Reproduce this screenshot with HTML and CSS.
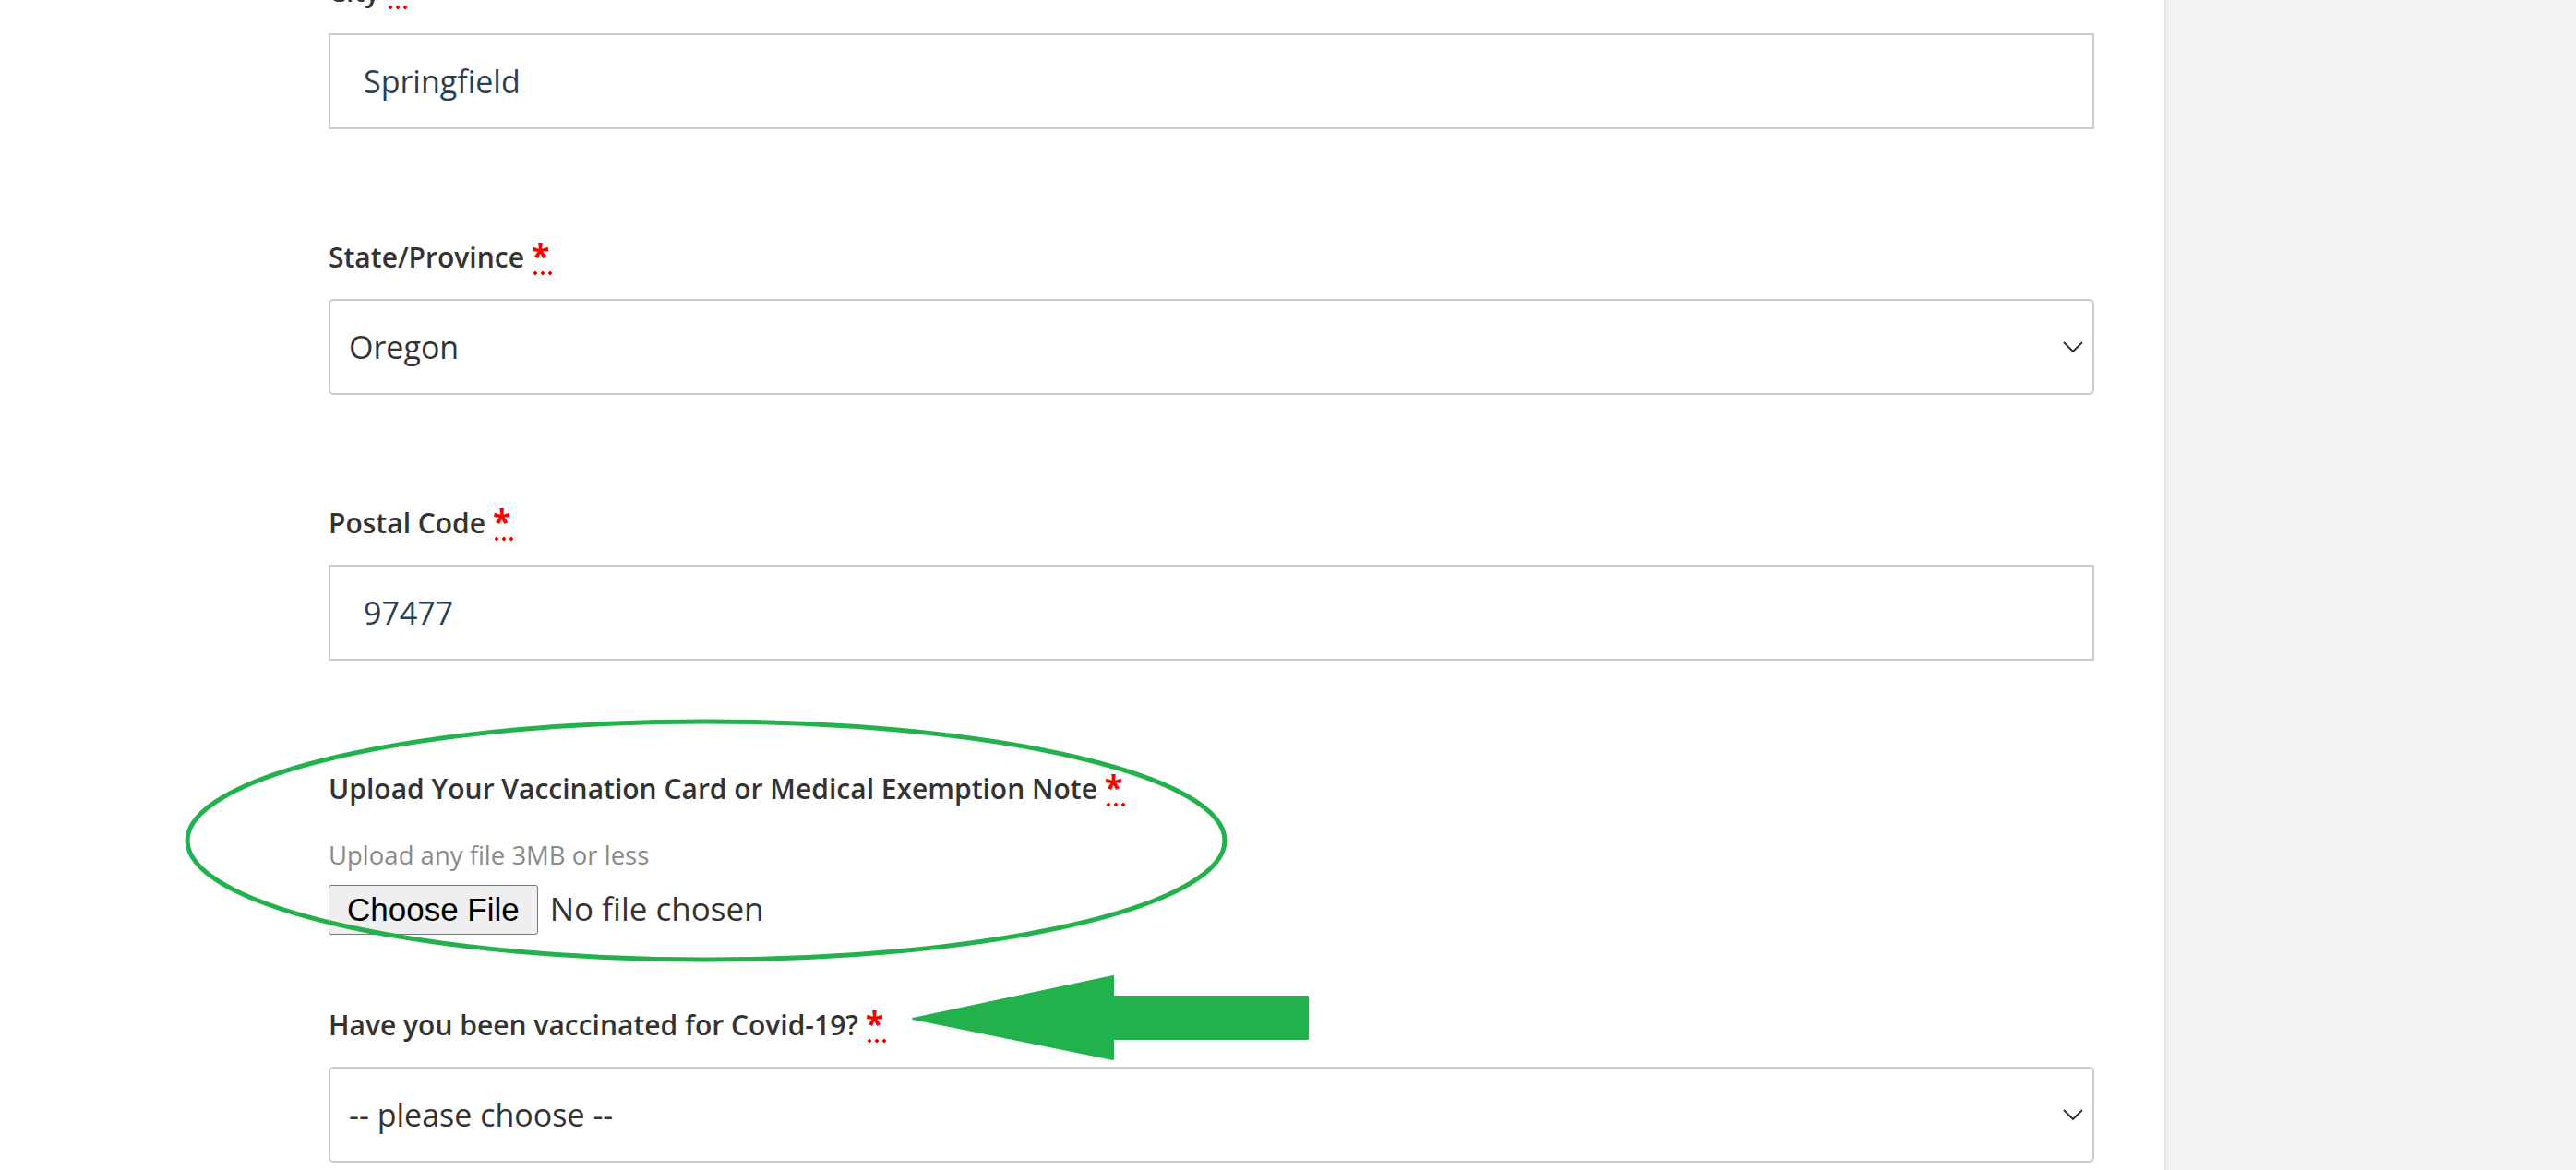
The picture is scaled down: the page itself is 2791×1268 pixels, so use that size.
FILE: index.html
```html
<!DOCTYPE html>
<html lang="en">
<head>
    <meta charset="UTF-8">
    <meta name="viewport" content="width=device-width, initial-scale=1.0">
    <title>Registration</title>
    <link rel="stylesheet" href="styles.css">
</head>
<body>
    <div class="page">
        <div class="main">
            <form class="reg-form">
                <div class="field">
                    <label for="city">City <abbr class="req" title="required">*</abbr></label>
                    <input type="text" id="city" class="text-input" value="Springfield">
                </div>

                <div class="field">
                    <label for="state">State/Province <abbr class="req" title="required">*</abbr></label>
                    <div class="select-wrap">
                        <select id="state">
                            <option>Oregon</option>
                            <option>Washington</option>
                            <option>California</option>
                        </select>
                        <svg class="chevron" width="22" height="12" viewBox="0 0 22 12"><polyline points="1,1 11,11 21,1" fill="none" stroke="#333" stroke-width="2"/></svg>
                    </div>
                </div>

                <div class="field">
                    <label for="postal">Postal Code <abbr class="req" title="required">*</abbr></label>
                    <input type="text" id="postal" class="text-input" value="97477">
                </div>

                <!-- upload -->
                <div class="field field-upload">
                    <label for="card">Upload Your Vaccination Card or Medical Exemption Note <abbr class="req" title="required">*</abbr></label>
                    <div class="hint">Upload any file 3MB or less</div>
                    <input type="file" id="card" class="file-input">
                </div>

                <div class="field">
                    <label for="vaccinated">Have you been vaccinated for Covid-19? <abbr class="req" title="required">*</abbr></label>
                    <div class="select-wrap">
                        <select id="vaccinated">
                            <option>-- please choose --</option>
                            <option>Yes</option>
                            <option>No</option>
                        </select>
                        <svg class="chevron" width="22" height="12" viewBox="0 0 22 12"><polyline points="1,1 11,11 21,1" fill="none" stroke="#333" stroke-width="2"/></svg>
                    </div>
                </div>
            </form>
        </div>
        <div class="sidebar"></div>
    </div>

    <!-- annotations drawn over the form -->
    <svg class="markup" width="2791" height="1268" viewBox="0 0 2791 1268">
        <ellipse cx="765" cy="911" rx="562" ry="129" fill="none" stroke="#22b14c" stroke-width="5"/>
        <polygon points="989,1104 1206,1058 1206,1080 1417,1080 1417,1126 1206,1126 1206,1148" fill="#22b14c" stroke="#22b14c" stroke-width="2" stroke-linejoin="round"/>
    </svg>
</body>
</html>
```

FILE: styles.css
```css
body {
    margin: 0;
    padding: 0;
    font-family: "Open Sans", sans-serif;
    color: #333;
    background-color: #ffffff;
    overflow: hidden;
}
.page {
    display: flex;
    min-height: 1268px;
}
.main {
    flex: 0 0 2345px;
    box-sizing: border-box;
    padding: 0 76px 0 356px;
    background-color: #ffffff;
}
.sidebar {
    flex: 1;
    background-color: #f3f2f1;
    border-left: 2px solid #e6e6e6;
}
.reg-form {
    margin-top: -29px;
}
.field {
    margin-bottom: 119px;
}
.field-upload {
    margin-bottom: 78px;
}
label {
    display: block;
    font-size: 30px;
    line-height: 40px;
    font-weight: 600;
    color: #333;
    margin-bottom: 25px;
}
.req {
    position: relative;
    color: #ff0000;
    font-size: 36px;
    font-weight: 700;
    line-height: 0;
    text-decoration: none;
}
.req::after {
    content: "";
    position: absolute;
    left: 0;
    top: 42px;
    width: 22px;
    height: 4px;
    background: radial-gradient(circle, #ff0000 1.6px, transparent 2px) 0 0 / 8px 4px repeat-x;
}
.text-input {
    display: block;
    box-sizing: border-box;
    width: 100%;
    height: 104px;
    margin: 0;
    padding: 0 36px;
    border: 2px solid #cccccc;
    border-radius: 0;
    font-family: "Open Sans", sans-serif;
    font-size: 34px;
    color: #2c3e50;
    outline: none;
}
.select-wrap {
    position: relative;
}
select {
    display: block;
    box-sizing: border-box;
    width: 100%;
    height: 104px;
    margin: 0;
    padding: 0 60px 0 20px;
    border: 2px solid #cccccc;
    border-radius: 5px;
    background-color: #ffffff;
    font-family: "Open Sans", sans-serif;
    font-size: 34px;
    color: #333;
    appearance: none;
    -webkit-appearance: none;
    outline: none;
}
.chevron {
    position: absolute;
    right: 12px;
    top: 46px;
    pointer-events: none;
}
.hint {
    font-size: 27.5px;
    line-height: 40px;
    color: #8a8a8a;
    margin-top: 32px;
}
.file-input {
    display: block;
    margin-top: 12px;
    font-family: "Open Sans", sans-serif;
    font-size: 35px;
    color: #333;
}
.file-input::file-selector-button {
    font-family: "Liberation Sans", Arial, sans-serif;
    font-size: 35px;
    color: #000;
    height: 54px;
    padding: 0 19px;
    margin-right: 13px;
    background-color: #efefef;
    border: 1px solid #767676;
    border-radius: 3px;
}
.markup {
    position: absolute;
    top: 0;
    left: 0;
    pointer-events: none;
}
```
